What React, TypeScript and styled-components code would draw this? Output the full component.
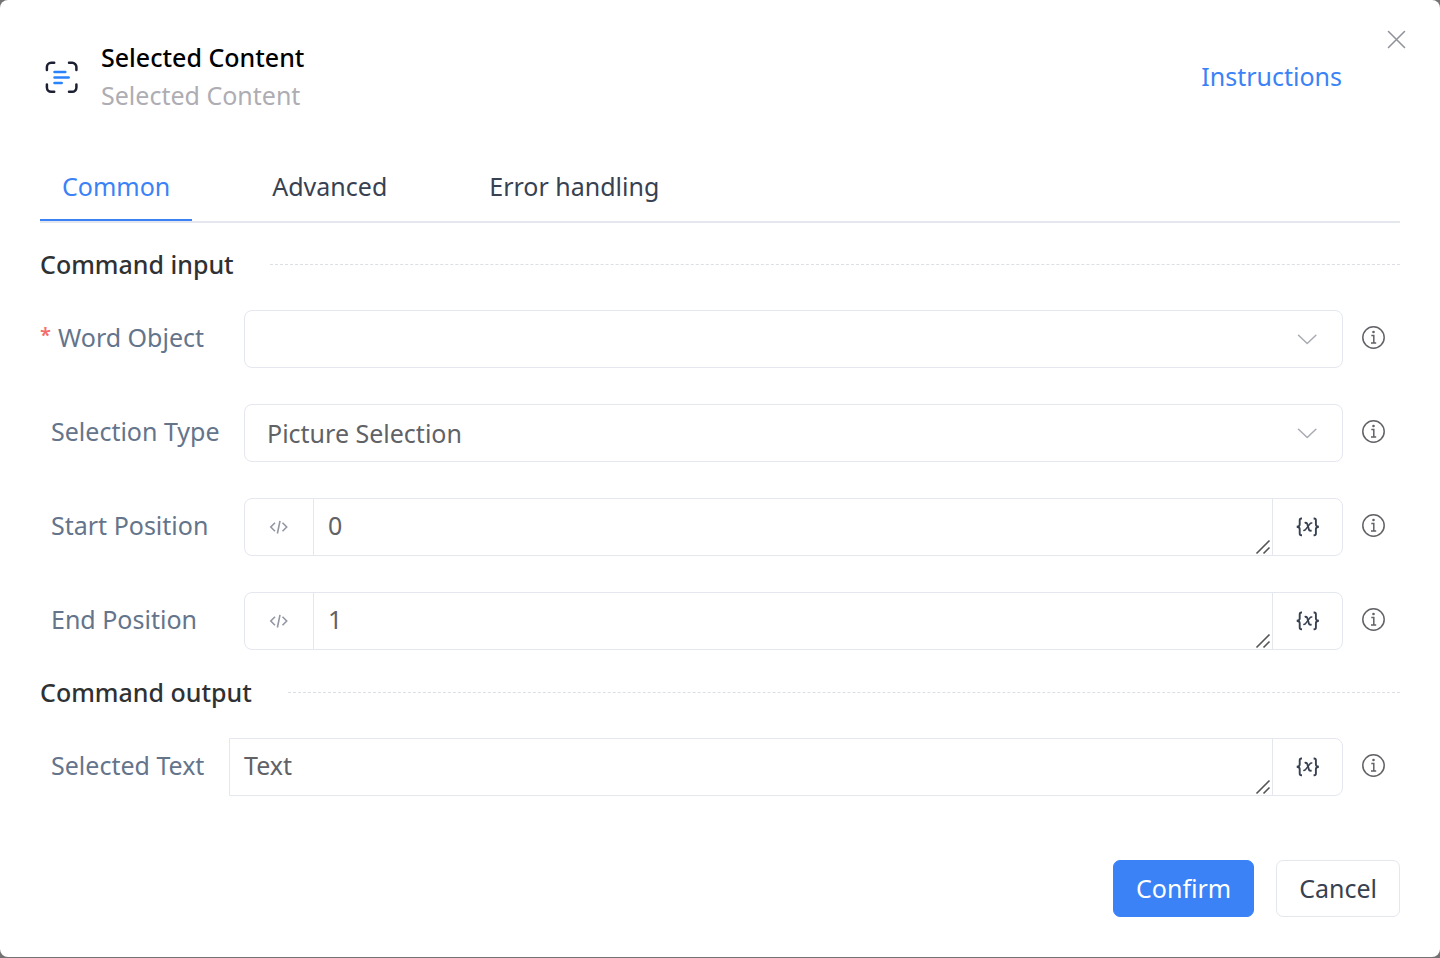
import React, { useState } from "react";
import styled, { createGlobalStyle, css } from "styled-components";

const GlobalStyle = createGlobalStyle`
  *, *::before, *::after { box-sizing: border-box; }
  body {
    margin: 0;
    background: #737373;
    font-family: "Noto Sans", "Open Sans", sans-serif;
    font-size: 25px;
    line-height: 38px;
    color: #374151;
  }
  button, select, textarea { font: inherit; color: inherit; }
`;

const Dialog = styled.form`
  position: relative;
  min-height: calc(100vh - 1px);
  padding: 38px 40px 40px;
  border-radius: 8px;
  background: #fff;
`;

const CloseButton = styled.button`
  position: absolute;
  top: 26px;
  right: 30px;
  display: flex;
  padding: 0;
  border: 0;
  background: none;
  cursor: pointer;
`;

const Header = styled.header`
  display: flex;
  align-items: center;
  gap: 18px;
  padding-right: 58px;
`;

const Titles = styled.div`
  flex: 1;
`;

const Title = styled.h1`
  margin: 0;
  font-size: 25px;
  font-weight: 500;
  color: #000;
`;

const Subtitle = styled.p`
  margin: 0;
  color: #aeadb3;
`;

const HelpLink = styled.a`
  color: #3b82f6;
  text-decoration: none;
`;

const Tabs = styled.div`
  display: flex;
  gap: 58px;
  margin-top: 39px;
  border-bottom: 2px solid #e4e7ed;
`;

const Tab = styled.button<{ $active: boolean }>`
  height: 68px;
  padding: 0 22px 2px;
  border: 0;
  border-top: 2px solid transparent;
  border-bottom: 2px solid ${(p) => (p.$active ? "#3b82f6" : "transparent")};
  background: none;
  color: ${(p) => (p.$active ? "#3b82f6" : "#374151")};
  cursor: pointer;
`;

const SectionTitle = styled.h2<{ $first?: boolean }>`
  display: flex;
  align-items: center;
  gap: 36px;
  margin: ${(p) => (p.$first ? "22px" : "23px")} 0 27px;
  font-size: 25px;
  font-weight: 500;
  color: #303133;

  &::after {
    content: "";
    flex: 1;
    border-top: 1px dashed #dcdfe6;
  }
`;

const Fields = styled.div`
  display: flex;
  flex-direction: column;
  gap: 36px;
`;

const Row = styled.div`
  display: flex;
  align-items: center;
  padding-right: 15px;
`;

const Label = styled.label<{ $compact?: boolean; $required?: boolean }>`
  flex: none;
  width: ${(p) => (p.$compact ? "189px" : "204px")};
  padding: 0 0 4px ${(p) => (p.$required ? "0" : "11px")};
  color: #64748b;
  white-space: nowrap;
`;

const Star = styled.span`
  display: inline-block;
  width: 18px;
  font-size: 20px;
  font-weight: 600;
  line-height: 20px;
  vertical-align: 5px;
  color: #f56c6c;
`;

const Control = styled.div<{ $squareStart?: boolean }>`
  position: relative;
  display: flex;
  flex: 1;
  min-width: 0;
  min-height: 58px;
  border: 1px solid #e4e7ed;
  border-radius: ${(p) => (p.$squareStart ? "0 8px 8px 0" : "8px")};
  overflow: hidden;
`;

const Select = styled.select`
  appearance: none;
  flex: 1;
  padding: 0 70px 0 22px;
  border: 0;
  outline: 0;
  background: transparent;
  color: #606266;
`;

const SelectArrow = styled.span`
  position: absolute;
  top: 17px;
  right: 25px;
  display: flex;
  pointer-events: none;
`;

const TextWrap = styled.div`
  position: relative;
  display: flex;
  flex: 1;
`;

const TextArea = styled.textarea`
  flex: 1;
  height: 56px;
  padding: 7px 14px;
  border: 0;
  outline: 0;
  resize: none;
  overflow: hidden;
  background: transparent;
  color: #606266;
`;

const Grip = styled.span`
  position: absolute;
  right: 1px;
  bottom: 0;
  display: flex;
  pointer-events: none;
`;

const addon = css`
  display: flex;
  flex: none;
  align-items: center;
  justify-content: center;
  width: 69px;
  padding: 0;
  border: 0;
  background: none;
  cursor: pointer;
`;

const ModeButton = styled.button`
  ${addon}
  border-right: 1px solid #e4e7ed;
`;

const VariableButton = styled.button`
  ${addon}
  width: 70px;
  border-left: 1px solid #e4e7ed;
`;

const InfoButton = styled.button`
  display: flex;
  flex: none;
  margin: 0 0 3px 19px;
  padding: 0;
  border: 0;
  background: none;
  cursor: help;
`;

const Footer = styled.footer`
  display: flex;
  justify-content: flex-end;
  gap: 22px;
  margin-top: 64px;
`;

const Button = styled.button<{ $primary?: boolean }>`
  height: 57px;
  padding: 0 22px 2px;
  border: 1px solid ${(p) => (p.$primary ? "#3b82f6" : "#e4e7ed")};
  border-radius: 7px;
  background: ${(p) => (p.$primary ? "#3b82f6" : "#fff")};
  color: ${(p) => (p.$primary ? "#fff" : "#374151")};
  cursor: pointer;
`;

const ScanTextIcon = () => (
  <svg width="43" height="42" viewBox="0 0 43 42" fill="none" strokeWidth="2.5" strokeLinecap="round" aria-hidden="true">
    <path stroke="#1d2033" d="M6.900 15V12a4.200 4.200 0 0 1 4.200-4.200H14.200M29 7.800h3.200a4.200 4.200 0 0 1 4.200 4.200v3M36.400 29.500v3.100a4.200 4.200 0 0 1-4.200 4.200H29M14.200 36.800h-3.100A4.200 4.200 0 0 1 6.900 32.600V29.500" />
    <path stroke="#2b83fb" d="M14.500 17h10.800M14.500 22.500h14.200M14.500 28h7.200" />
  </svg>
);

const CloseIcon = () => (
  <svg width="27" height="27" viewBox="0 0 27 27" fill="none" stroke="#909399" strokeWidth="1.6" strokeLinecap="round" aria-hidden="true">
    <path d="M5.500 5.500l16 16M21.500 5.500l-16 16" />
  </svg>
);

const ChevronIcon = () => (
  <svg width="20" height="24" viewBox="0 0 20 24" fill="none" stroke="#a8abb2" strokeWidth="1.5" strokeLinecap="round" strokeLinejoin="round" aria-hidden="true">
    <path d="M1.500 7.200l8.700 8.300 8.700-8.300" />
  </svg>
);

const CodeIcon = () => (
  <svg width="20" height="16" viewBox="0 0 20 16" fill="none" stroke="#9297a3" strokeWidth="1.600" aria-hidden="true">
    <path d="M6 3.800L1.800 8l4.200 4.200M13.500 3.800L17.700 8l-4.200 4.200M11 1.800L8.400 14.500" />
  </svg>
);

const VariableIcon = () => (
  <svg width="24" height="20" viewBox="0 0 24 20" fill="none" stroke="#374151" strokeWidth="1.900" aria-hidden="true">
    <path d="M6 1.500H5.400Q3.700 1.500 3.700 3.200V7.500Q3.700 9.500 .8 9.800Q3.700 10.100 3.700 12.100V16.500Q3.700 18.300 5.400 18.300H6" />
    <path d="M17.600 1.500h.6q1.700 0 1.700 1.700v4.300q0 2 2.900 2.300q-2.900 .3-2.900 2.300v4.400q0 1.800-1.700 1.800h-.6" />
    <path d="M8.700 6q2-.8 2.700 1.200l1.500 5.200q.6 2 2.700 1" />
    <path strokeWidth="1.500" d="M16.300 6.200q-1.500-.5-2.700 1l-3.500 4.700q-1.200 1.900-2.800 1.400" />
  </svg>
);

const InfoIcon = () => (
  <svg width="23" height="23" viewBox="0 0 23 23" fill="none" stroke="#606266" strokeWidth="1.500" aria-hidden="true">
    <circle cx="11.500" cy="11.500" r="10.700" />
    <path d="M9.300 9.600h2.500v7.400M9 17h5.200" />
    <circle cx="11.500" cy="6" r="1.300" fill="#606266" stroke="none" />
  </svg>
);

const GripIcon = () => (
  <svg width="16" height="16" viewBox="0 0 16 16" fill="none" stroke="#555" strokeWidth="1.600" aria-hidden="true">
    <path d="M1.500 14.500l13-13M8.500 14.500l6-6" />
  </svg>
);

const Info = ({ topic }: { topic: string }) => (
  <InfoButton type="button" aria-label={`About ${topic}`}>
    <InfoIcon />
  </InfoButton>
);

type SelectFieldProps = { id: string; label: string; options: string[]; required?: boolean };

const SelectField = ({ id, label, options, required }: SelectFieldProps) => (
  <Row>
    <Label htmlFor={id} $required={required}>
      {required && <Star>*</Star>}
      {label}
    </Label>
    <Control>
      <Select id={id} defaultValue={options[0]}>
        {options.map((option) => (
          <option key={option}>{option}</option>
        ))}
      </Select>
      <SelectArrow>
        <ChevronIcon />
      </SelectArrow>
    </Control>
    <Info topic={label} />
  </Row>
);

type TextFieldProps = { id: string; label: string; value: string; output?: boolean };

const TextField = ({ id, label, value, output }: TextFieldProps) => (
  <Row>
    <Label htmlFor={id} $compact={output}>
      {label}
    </Label>
    <Control $squareStart={output}>
      {!output && (
        <ModeButton type="button" aria-label="Expression mode">
          <CodeIcon />
        </ModeButton>
      )}
      <TextWrap>
        <TextArea id={id} rows={1} defaultValue={value} spellCheck={false} />
        <Grip>
          <GripIcon />
        </Grip>
      </TextWrap>
      <VariableButton type="button" aria-label="Insert variable">
        <VariableIcon />
      </VariableButton>
    </Control>
    <Info topic={label} />
  </Row>
);

const TABS = ["Common", "Advanced", "Error handling"];

export default function App() {
  const [active, setActive] = useState(TABS[0]);

  return (
    <>
      <GlobalStyle />
      <Dialog onSubmit={(e: React.FormEvent) => e.preventDefault()}>
        <CloseButton type="button" aria-label="Close">
          <CloseIcon />
        </CloseButton>
        <Header>
          <ScanTextIcon />
          <Titles>
            <Title>Selected Content</Title>
            <Subtitle>Selected Content</Subtitle>
          </Titles>
          <HelpLink href="#instructions">Instructions</HelpLink>
        </Header>
        <Tabs role="tablist">
          {TABS.map((tab) => (
            <Tab
              key={tab}
              type="button"
              role="tab"
              aria-selected={tab === active}
              $active={tab === active}
              onClick={() => setActive(tab)}
            >
              {tab}
            </Tab>
          ))}
        </Tabs>
        <SectionTitle $first>Command input</SectionTitle>
        <Fields>
          <SelectField id="word-object" label="Word Object" options={[""]} required />
          <SelectField id="selection-type" label="Selection Type" options={["Picture Selection"]} />
          <TextField id="start-position" label="Start Position" value="0" />
          <TextField id="end-position" label="End Position" value="1" />
        </Fields>
        <SectionTitle>Command output</SectionTitle>
        <Fields>
          <TextField id="selected-text" label="Selected Text" value="Text" output />
        </Fields>
        <Footer>
          <Button type="submit" $primary>
            Confirm
          </Button>
          <Button type="button">Cancel</Button>
        </Footer>
      </Dialog>
    </>
  );
}
